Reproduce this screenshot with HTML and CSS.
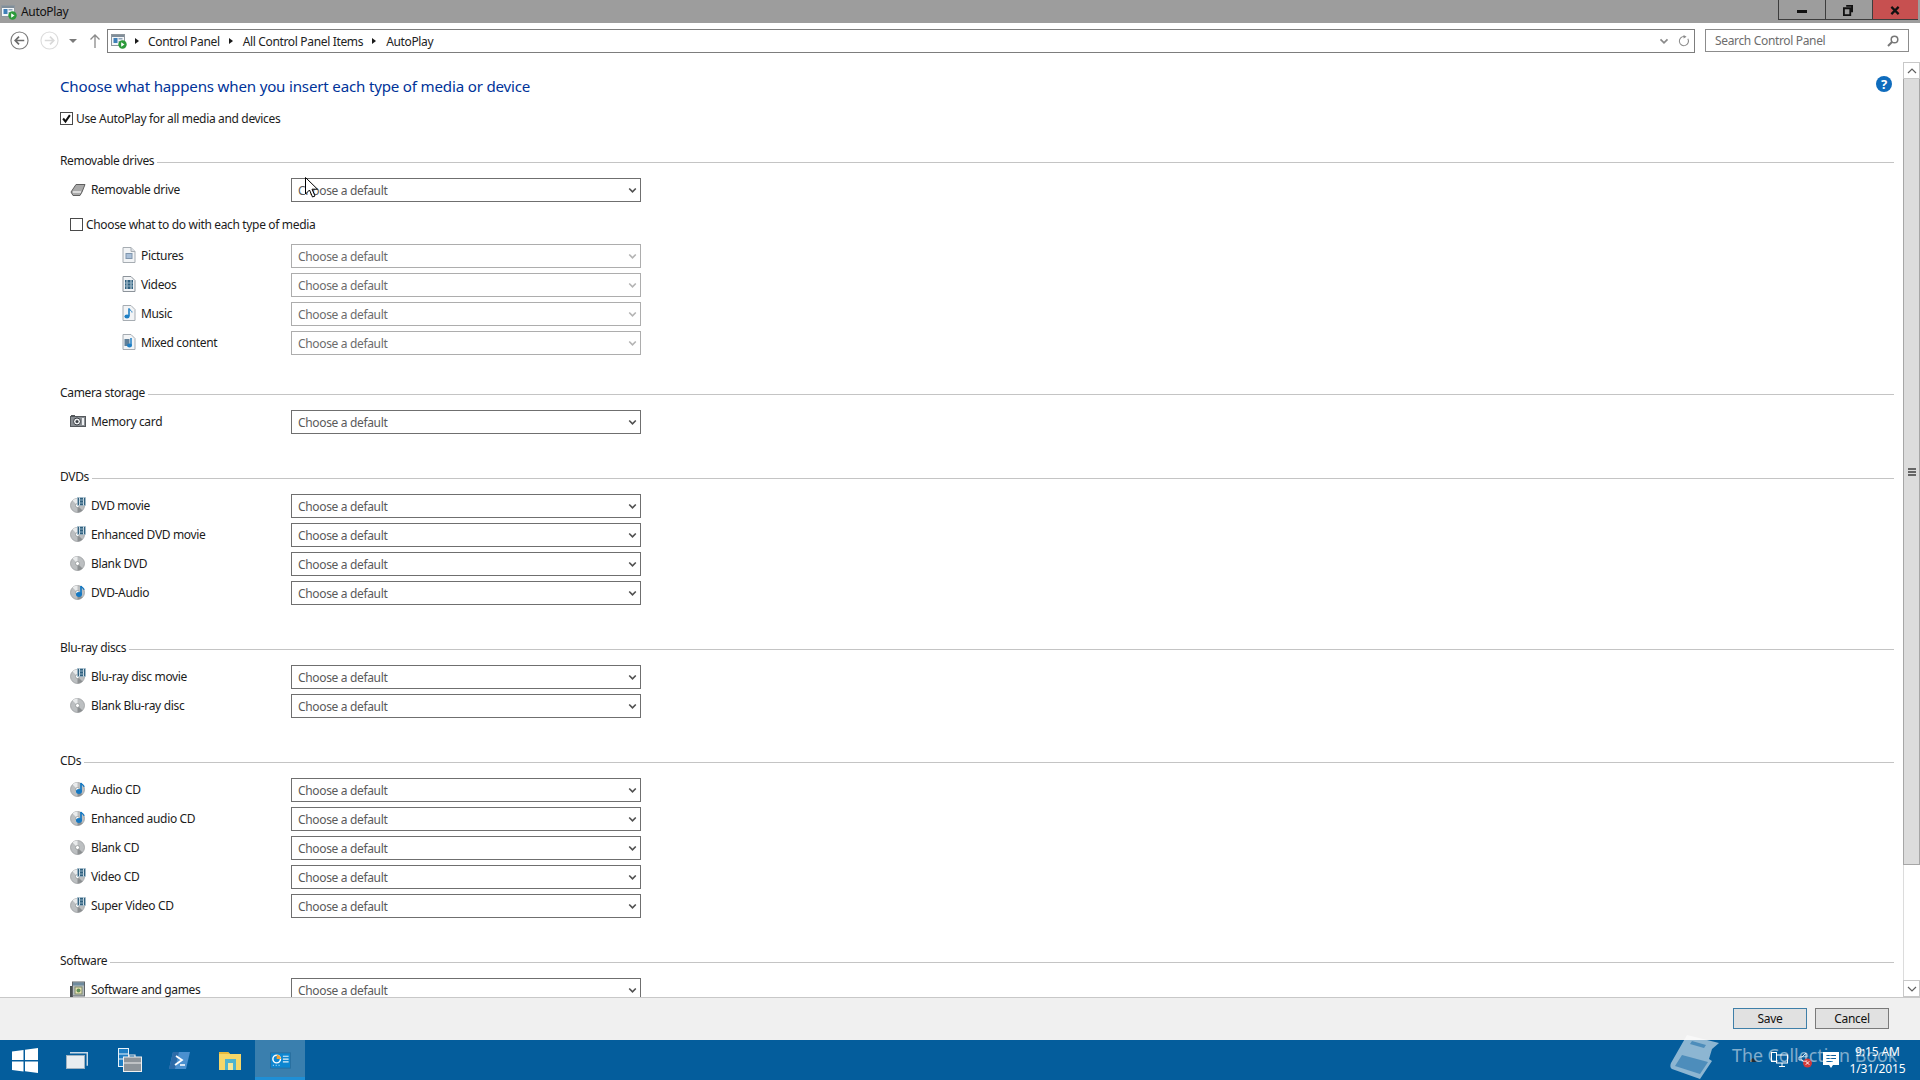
FILE: index.html
```html
<!DOCTYPE html>
<html lang="en">
<head>
<meta charset="utf-8">
<title>AutoPlay</title>
<link rel="stylesheet" href="styles.css">
</head>
<body>
<svg class="defs" width="0" height="0" aria-hidden="true">
  <symbol id="chev" viewBox="0 0 11 8"><path d="M1.500 1.500 5.500 5.500 9.500 1.500" fill="none" stroke="currentColor" stroke-width="2"/></symbol>
  <symbol id="cp" viewBox="0 0 16 16"><rect x=".5" y="1.500" width="13" height="11" fill="#f4f6f8" stroke="#8f979e"/><rect x="1" y="2" width="12" height="2" fill="#7f8d99"/><rect x="2.500" y="5" width="4" height="5" fill="#3f7fb8"/><rect x="7.500" y="5" width="4" height="1.500" fill="#8fa5b8"/><rect x="7.500" y="8" width="4" height="1.500" fill="#8fa5b8"/><circle cx="11.500" cy="11.500" r="4.200" fill="#2c9a3a"/><path d="M10.200 9.300v4.400l3.300-2.200z" fill="#fff"/></symbol>
  <symbol id="drive" viewBox="0 0 16 16"><path d="M1 11 6 3.500h9L12 11l-2 3.500H3z" fill="#a9a9a9" stroke="#5e5e5e"/><path d="M3 11h8" stroke="#ececec" stroke-width="1.500"/></symbol>
  <symbol id="doc-pic" viewBox="0 0 14 16"><path d="M1 .5h8l4 4v11H1z" fill="#f2f4f6" stroke="#a6acb2"/><path d="M9 .5v4h4" fill="#dde1e5" stroke="#a6acb2"/><rect x="4" y="6.500" width="6" height="5" fill="#a9bfd8" stroke="#8096ad"/></symbol>
  <symbol id="doc-vid" viewBox="0 0 14 16"><path d="M1 .5h8l4 4v11H1z" fill="#f2f4f6" stroke="#8c939a"/><rect x="3" y="4" width="8" height="9" fill="#31617f"/><path d="M5 4v9M9 4v9" stroke="#c9d6df"/><path d="M3 7h8M3 10h8" stroke="#8fb0c4"/></symbol>
  <symbol id="doc-mus" viewBox="0 0 14 16"><path d="M1 .5h8l4 4v11H1z" fill="#f2f4f6" stroke="#a6acb2"/><path d="M7 3.500v7.500" stroke="#1f7fc4" stroke-width="1.600"/><path d="M7 3.500c1 2 3 2 3 4" stroke="#1f7fc4" fill="none"/><ellipse cx="5" cy="11.500" rx="2.600" ry="2" fill="#1f7fc4"/></symbol>
  <symbol id="doc-mix" viewBox="0 0 14 16"><path d="M1 .5h8l4 4v11H1z" fill="#f2f4f6" stroke="#a6acb2"/><rect x="2.500" y="5" width="5" height="7" fill="#5f7f98"/><path d="M9 4v7.500" stroke="#1f7fc4" stroke-width="1.500"/><ellipse cx="7.500" cy="11.500" rx="2.500" ry="2" fill="#1f7fc4"/></symbol>
  <symbol id="camera" viewBox="0 0 16 16"><rect x=".5" y="3.500" width="15" height="10" fill="#8a8f94" stroke="#54585c"/><rect x="1" y="2" width="4" height="2" fill="#54585c"/><circle cx="7" cy="8.500" r="3.500" fill="#eef0f2" stroke="#3c4045"/><circle cx="7" cy="8.500" r="1.500" fill="#3c4045"/><rect x="12" y="5" width="2" height="7" fill="#eef0f2"/></symbol>
  <symbol id="disc" viewBox="0 0 16 16"><circle cx="7.500" cy="8.500" r="7" fill="#bcbfc1" stroke="#9a9d9f" stroke-width=".8"/><path d="M7.500 8.500 2.500 3.500A7 7 0 0 1 7.500 1.500z" fill="#e9ebec"/><path d="M7.500 8.500 12.500 13.500A7 7 0 0 1 7.500 15.500z" fill="#8c9092"/><circle cx="7.500" cy="8.500" r="2" fill="#fff" stroke="#8c9092" stroke-width=".7"/></symbol>
  <symbol id="disc-vid" viewBox="0 0 16 16"><use href="#disc"/><rect x="7.500" y=".5" width="8" height="8" fill="#31617f" stroke="#a9c0cf" stroke-width=".6"/><path d="M9.500 .5v8M13.500 .5v8" stroke="#d3dfe6"/><path d="M9.500 3h4M9.500 6h4" stroke="#8fb0c4"/></symbol>
  <symbol id="disc-mus" viewBox="0 0 16 16"><use href="#disc"/><path d="M11 2v8" stroke="#1478c2" stroke-width="1.700"/><path d="M11 2c1 2 3 2 3 4" stroke="#1478c2" fill="none" stroke-width="1.200"/><ellipse cx="9" cy="10.500" rx="3" ry="2.400" fill="#1478c2"/></symbol>
  <symbol id="games" viewBox="0 0 16 16"><path d="M0 5h3v11H0z" fill="#4a4f52"/><rect x="2.500" y="1" width="12" height="14" fill="#b6bcc0" stroke="#5f6468"/><rect x="3" y="1.500" width="11" height="3" fill="#6f8b9e"/><rect x="5" y="6" width="7" height="7" fill="#e7e1b0" stroke="#7c8a6a"/><circle cx="8.500" cy="9.500" r="2" fill="#5f8f55"/></symbol>
</svg>

<header class="titlebar">
  <svg class="title-icon"><use href="#cp"/></svg>
  <span class="title-text">AutoPlay</span>
  <div class="window-buttons">
    <div class="wb"><span class="wb-min"></span></div>
    <div class="wb"><svg class="wb-svg" viewBox="0 0 11 12"><path d="M3.500 1H10V8M1 3.500H8V11H1z" fill="none" stroke="#111" stroke-width="2"/></svg></div>
    <div class="wb wb-close"><svg class="wb-svg" viewBox="0 0 11 11"><path d="M1.500 1.500 9.500 9.500M9.500 1.500 1.500 9.500" stroke="#111" stroke-width="2.400"/></svg></div>
  </div>
</header>

<nav class="navbar">
  <svg class="nav-circle" viewBox="0 0 20 20"><circle cx="10" cy="10" r="9" fill="#fff" stroke="#7c7c7c" stroke-width="1.200"/><path d="M15 10H6M9.500 6 5.500 10 9.500 14" fill="none" stroke="#6b6b6b" stroke-width="1.800"/></svg>
  <svg class="nav-circle nav-forward" viewBox="0 0 20 20"><circle cx="10" cy="10" r="9" fill="#fff" stroke="#dcdcdc" stroke-width="1.200"/><path d="M5 10H14M10.500 6 14.500 10 10.500 14" fill="none" stroke="#d9d9d9" stroke-width="1.800"/></svg>
  <span class="nav-drop"></span>
  <svg class="nav-up" viewBox="0 0 12 16"><path d="M6 15V2M1.500 6.500 6 2l4.500 4.500" fill="none" stroke="#8a8a8a" stroke-width="1.300"/></svg>
  <div class="address">
    <svg class="addr-icon"><use href="#cp"/></svg>
    <span class="crumb-arrow first"></span><span class="crumb">Control Panel</span>
    <span class="crumb-arrow"></span><span class="crumb">All Control Panel Items</span>
    <span class="crumb-arrow"></span><span class="crumb">AutoPlay</span>
    <svg class="addr-chev"><use href="#chev"/></svg>
    <svg class="addr-refresh" viewBox="0 0 14 14"><path d="M11.500 4.500A5.300 5.300 0 1 1 7 1.800" fill="none" stroke="#8a8a8a" stroke-width="1.200"/><path d="M6.500 0 10 2 6.500 4z" fill="#8a8a8a"/></svg>
  </div>
  <div class="search">
    <span class="search-text">Search Control Panel</span>
    <svg class="search-icon" viewBox="0 0 12 12"><circle cx="7.500" cy="4.500" r="3.300" fill="none" stroke="#777" stroke-width="1.500"/><path d="M5 7 1 11" stroke="#777" stroke-width="2"/></svg>
  </div>
</nav>

<main class="main">
  <div class="content">
    <div class="head-row">
      <h1 class="heading">Choose what happens when you insert each type of media or device</h1>
      <svg class="help" viewBox="0 0 16 16"><circle cx="8" cy="8" r="8" fill="#0f6cbd"/><text x="8" y="12.500" class="help-q">?</text></svg>
    </div>
    <label class="check-row"><span class="check checked"><svg viewBox="0 0 13 13"><path d="M2.500 6.500 5.300 10 10.500 2.500" fill="none" stroke="#111" stroke-width="2.400"/></svg></span>Use AutoPlay for all media and devices</label>

    <section class="section sec-first">
      <div class="sec-head"><span class="sec-title">Removable drives</span><span class="sec-line"></span></div>
      <div class="row"><div class="name"><svg class="ic"><use href="#drive"/></svg>Removable drive</div><div class="combo"><span>Choose a default</span><svg class="arrow"><use href="#chev"/></svg></div></div>
      <label class="check-row sub-check"><span class="check"></span>Choose what to do with each type of media</label>
      <div class="row"><div class="name sub"><svg class="ic-doc"><use href="#doc-pic"/></svg>Pictures</div><div class="combo off"><span>Choose a default</span><svg class="arrow"><use href="#chev"/></svg></div></div>
      <div class="row"><div class="name sub"><svg class="ic-doc"><use href="#doc-vid"/></svg>Videos</div><div class="combo off"><span>Choose a default</span><svg class="arrow"><use href="#chev"/></svg></div></div>
      <div class="row"><div class="name sub"><svg class="ic-doc"><use href="#doc-mus"/></svg>Music</div><div class="combo off"><span>Choose a default</span><svg class="arrow"><use href="#chev"/></svg></div></div>
      <div class="row"><div class="name sub"><svg class="ic-doc"><use href="#doc-mix"/></svg>Mixed content</div><div class="combo off"><span>Choose a default</span><svg class="arrow"><use href="#chev"/></svg></div></div>
    </section>

    <section class="section sec-camera">
      <div class="sec-head"><span class="sec-title">Camera storage</span><span class="sec-line"></span></div>
      <div class="row"><div class="name"><svg class="ic"><use href="#camera"/></svg>Memory card</div><div class="combo"><span>Choose a default</span><svg class="arrow"><use href="#chev"/></svg></div></div>
    </section>

    <section class="section">
      <div class="sec-head"><span class="sec-title">DVDs</span><span class="sec-line"></span></div>
      <div class="row"><div class="name"><svg class="ic"><use href="#disc-vid"/></svg>DVD movie</div><div class="combo"><span>Choose a default</span><svg class="arrow"><use href="#chev"/></svg></div></div>
      <div class="row"><div class="name"><svg class="ic"><use href="#disc-vid"/></svg>Enhanced DVD movie</div><div class="combo"><span>Choose a default</span><svg class="arrow"><use href="#chev"/></svg></div></div>
      <div class="row"><div class="name"><svg class="ic"><use href="#disc"/></svg>Blank DVD</div><div class="combo"><span>Choose a default</span><svg class="arrow"><use href="#chev"/></svg></div></div>
      <div class="row"><div class="name"><svg class="ic"><use href="#disc-mus"/></svg>DVD-Audio</div><div class="combo"><span>Choose a default</span><svg class="arrow"><use href="#chev"/></svg></div></div>
    </section>

    <section class="section">
      <div class="sec-head"><span class="sec-title">Blu-ray discs</span><span class="sec-line"></span></div>
      <div class="row"><div class="name"><svg class="ic"><use href="#disc-vid"/></svg>Blu-ray disc movie</div><div class="combo"><span>Choose a default</span><svg class="arrow"><use href="#chev"/></svg></div></div>
      <div class="row"><div class="name"><svg class="ic"><use href="#disc"/></svg>Blank Blu-ray disc</div><div class="combo"><span>Choose a default</span><svg class="arrow"><use href="#chev"/></svg></div></div>
    </section>

    <section class="section">
      <div class="sec-head"><span class="sec-title">CDs</span><span class="sec-line"></span></div>
      <div class="row"><div class="name"><svg class="ic"><use href="#disc-mus"/></svg>Audio CD</div><div class="combo"><span>Choose a default</span><svg class="arrow"><use href="#chev"/></svg></div></div>
      <div class="row"><div class="name"><svg class="ic"><use href="#disc-mus"/></svg>Enhanced audio CD</div><div class="combo"><span>Choose a default</span><svg class="arrow"><use href="#chev"/></svg></div></div>
      <div class="row"><div class="name"><svg class="ic"><use href="#disc"/></svg>Blank CD</div><div class="combo"><span>Choose a default</span><svg class="arrow"><use href="#chev"/></svg></div></div>
      <div class="row"><div class="name"><svg class="ic"><use href="#disc-vid"/></svg>Video CD</div><div class="combo"><span>Choose a default</span><svg class="arrow"><use href="#chev"/></svg></div></div>
      <div class="row"><div class="name"><svg class="ic"><use href="#disc-vid"/></svg>Super Video CD</div><div class="combo"><span>Choose a default</span><svg class="arrow"><use href="#chev"/></svg></div></div>
    </section>

    <section class="section">
      <div class="sec-head"><span class="sec-title">Software</span><span class="sec-line"></span></div>
      <div class="row"><div class="name"><svg class="ic"><use href="#games"/></svg>Software and games</div><div class="combo"><span>Choose a default</span><svg class="arrow"><use href="#chev"/></svg></div></div>
    </section>
  </div>
  <aside class="scrollbar">
    <div class="sb-btn"><svg class="sb-chev" viewBox="0 0 10 6"><path d="M1 5 5 1 9 5" fill="none" stroke="#606060" stroke-width="1.200"/></svg></div>
    <div class="sb-thumb"><span class="grip"></span><span class="grip"></span><span class="grip"></span></div>
    <div class="sb-track"></div>
    <div class="sb-btn"><svg class="sb-chev" viewBox="0 0 10 6"><path d="M1 1 5 5 9 1" fill="none" stroke="#606060" stroke-width="1.200"/></svg></div>
  </aside>
</main>

<footer class="footer">
  <button class="btn btn-default">Save</button>
  <button class="btn">Cancel</button>
</footer>

<div class="taskbar">
  <div class="task-item"><svg class="t-start" viewBox="0 0 26 25"><path d="M0 3.500 11.500 2v10H0zM13 1.800 26 0v12H13zM0 13.500h11.500v10L0 22zM13 13.500h13V25l-13-1.800z" fill="#fff"/></svg></div>
  <div class="task-item"><svg class="t-view" viewBox="0 0 22 17"><path d="M4 .7h17.300v13" fill="none" stroke="#c9d9e6" stroke-width="1.500"/><rect x=".5" y="3.500" width="18" height="13" fill="#e9edf0" stroke="#9fb2c1"/></svg></div>
  <div class="task-item"><svg class="t-server" viewBox="0 0 24 24"><rect x=".5" y=".5" width="10" height="18" fill="#1d7ec4" stroke="#e8f2f9"/><path d="M1 6h9M1 11h9" stroke="#e8f2f9"/><path d="M11 9V7h6v2" fill="none" stroke="#e8e8e8" stroke-width="1.200"/><rect x="5.500" y="9" width="18" height="14.500" fill="#8d949a" stroke="#f0f0f0"/><path d="M6 15h17" stroke="#f0f0f0"/></svg></div>
  <div class="task-item"><svg class="t-ps" viewBox="0 0 21 17"><path d="M4 0h17l-4 17H0z" fill="#4a90cf"/><path d="M0 17 4 0h6L6 17z" fill="#2c6ba8"/><path d="M7 4l6 4-7 5" fill="none" stroke="#fff" stroke-width="1.800"/><path d="M11 13h5" stroke="#fff" stroke-width="1.500"/></svg></div>
  <div class="task-item"><svg class="t-folder" viewBox="0 0 22 19"><path d="M0 1h9l2 2h11v16H0z" fill="#f6d768"/><path d="M0 1h9l2 2H0z" fill="#e7b93c"/><rect x="6" y="8" width="11" height="11" fill="#4fb4cf"/><rect x="9" y="12" width="5" height="7" fill="#f6e79a"/></svg></div>
  <div class="task-item task-active"><svg class="t-cp" viewBox="0 0 22 17"><rect x=".5" y=".5" width="21" height="16" fill="#0e86d0" stroke="#2a6f9f"/><circle cx="7" cy="7" r="4" fill="none" stroke="#fff" stroke-width="1.500"/><path d="M7 7V2.500A4.500 4.500 0 0 1 11.500 7z" fill="#f2a33a"/><path d="M13.500 4h6M13.500 7h6M13.500 10h6" stroke="#e6f3fb" stroke-width="1.200"/><path d="M3 13.500h1M6 13.500h1M9 13.500h1" stroke="#e6f3fb"/></svg></div>
  <div class="tray">
    <span class="tray-up"></span>
    <svg class="tray-net" viewBox="0 0 17 16"><rect x=".5" y=".5" width="5" height="9" fill="none" stroke="#fff"/><rect x="5.500" y="3" width="11" height="8" fill="#0a5f9e" stroke="#fff"/><path d="M11 11v3M8 14.500h6" stroke="#fff"/></svg>
    <svg class="tray-vol" viewBox="0 0 14 16"><path d="M1 5h3l4-4v11L4 8H1z" fill="none" stroke="#cfe0ee"/><circle cx="9.500" cy="11" r="4.500" fill="#d23a3a"/><path d="M7.800 9.300l3.400 3.400M11.200 9.300l-3.400 3.400" stroke="#fff"/></svg>
    <svg class="tray-msg" viewBox="0 0 16 17"><path d="M0 0h16v13H10L8 16 6 13H0z" fill="#fff"/><path d="M3 3.500h10M3 6.500h10M3 9.500h7" stroke="#0a5f9e"/></svg>
    <div class="clock"><span>9:15 AM</span><span>1/31/2015</span></div>
  </div>
</div>

<div class="watermark">
  <svg class="wm-book" viewBox="0 0 50 46"><path d="M17 2 49 10 42 16l-3 10 3 2-12 18L2 36c-2-1-2-4-1-6z" fill="#fff" fill-opacity=".55"/><path d="M22 8l14 4-2 3-14-4zM5 33l25 8 8-12-26-7z" fill="#1a6ca8" fill-opacity=".55"/></svg>
  <span class="wm-text">The Collection Book</span>
</div>

<svg class="cursor" viewBox="0 0 13 21"><path d="M.5.5V17l4-4 3 7 2.500-1-3-6.800H12.500z" fill="#fff" stroke="#000"/></svg>
</body>
</html>
```
FILE: styles.css
```css
* { box-sizing: border-box; }
html, body { margin: 0; height: 100%; }
body {
  width: 1920px;
  height: 1080px;
  overflow: hidden;
  display: flex;
  flex-direction: column;
  position: relative;
  background: #fff;
  color: #1c1c1c;
  font-family: "Noto Sans", "Open Sans", sans-serif;
  font-size: 12px;
  letter-spacing: -0.34px;
}
.defs { position: absolute; }

/* title bar */
.titlebar {
  height: 23px;
  flex: none;
  display: flex;
  background: #9d9d9d;
  align-items: flex-start;
}
.title-icon { width: 16px; height: 16px; margin: 4px 4px 0 1px; }
.title-text { margin-top: 3px; line-height: 17px; color: #111; }
.window-buttons { margin-left: auto; margin-right: 2px; display: flex; height: 20px; border-bottom: 1px solid #3d3d3d; }
.wb { width: 47px; display: flex; align-items: center; justify-content: center; border-left: 1px solid #3d3d3d; }
.wb-close { background: #c75050; width: 46px; }
.wb-min { width: 10px; height: 3px; background: #111; margin-top: 3px; }
.wb-svg { width: 10px; height: 11px; margin: 1px 2px 0 0; }

/* navigation */
.navbar {
  height: 37px;
  flex: none;
  display: flex;
  align-items: flex-start;
  padding-top: 6px;
}
.nav-circle { width: 19px; height: 19px; margin: 2px 0 0 10px; flex: none; }
.nav-forward { margin-left: 11px; }
.nav-drop { width: 0; height: 0; border: 4px solid transparent; border-top: 4px solid #7a7a7a; border-bottom: 0; margin: 10px 0 0 10px; }
.nav-up { width: 12px; height: 16px; margin: 4px 0 0 12px; flex: none; }
.address {
  margin-left: 6px;
  width: 1588px;
  height: 24px;
  border: 1px solid #7d7d7d;
  display: flex;
  align-items: center;
  padding-left: 3px;
  color: #222;
}
.addr-icon { width: 16px; height: 16px; flex: none; }
.crumb-arrow { width: 0; height: 0; border: 3.500px solid transparent; border-left: 4px solid #1a1a1a; border-right: 0; margin: 0 10px 0 9px; }
.crumb-arrow.first { margin: 0 9px 0 8px; }
.addr-chev { width: 10px; height: 7px; color: #8a8a8a; margin-left: auto; }
.addr-refresh { width: 12px; height: 14px; margin: 0 4px 0 9px; }
.search {
  margin-left: 10px;
  width: 204px;
  height: 23px;
  border: 1px solid #8c8c8c;
  display: flex;
  align-items: center;
  justify-content: space-between;
  padding: 0 9px 0 9px;
  color: #6d6d6d;
}
.search-icon { width: 12px; height: 12px; }

/* main */
.main { flex: 1; min-height: 0; display: flex; }
.content { flex: 1; min-width: 0; padding: 15px 9px 0 60px; overflow: hidden; }
.head-row { display: flex; align-items: center; justify-content: space-between; height: 22px; }
.heading { margin: 0; font-size: 15.100px; font-weight: 400; line-height: 22px; color: #003399; letter-spacing: -0.18px; }
.help { width: 16px; height: 16px; margin: 0 2px 0 0; position: relative; top: -2px; }
.help-q { fill: #fff; font-size: 13px; font-weight: 700; text-anchor: middle; font-family: "Noto Sans", sans-serif; }
.check-row { display: flex; align-items: center; height: 17px; margin-top: 13px; }
.check { width: 13px; height: 13px; border: 1px solid #4a4a4a; margin-right: 3px; flex: none; background: #fff; }
.check svg { display: block; width: 11px; height: 11px; }
.sub-check { margin: 14px 0 11px 10px; }

.section { margin-top: 36px; }
.sec-camera { margin-top: 31px; }
.sec-first { margin-top: 27px; }
.sec-head { display: flex; align-items: center; height: 16px; margin-bottom: 8px; }
.sec-title { line-height: 16px; position: relative; top: -1px; margin-right: 3px; }
.sec-line { flex: 1; height: 1px; background: #c4c4c4; }
.row { display: grid; grid-template-columns: 231px 350px; height: 24px; margin-bottom: 5px; }
.row:last-child { margin-bottom: 0; }
.name { display: flex; align-items: center; padding: 0 0 2px 10px; }
.name.sub { padding-left: 62px; }
.ic { width: 16px; height: 16px; margin-right: 5px; flex: none; }
.ic-doc { width: 14px; height: 16px; margin-right: 5px; flex: none; }
.combo {
  border: 1px solid #6f6f6f;
  display: flex;
  align-items: center;
  justify-content: space-between;
  padding: 0 3px 0 6px;
  color: #5a5a5a;
  background: #fff;
}
.combo.off { border-color: #adadad; color: #6c6c6c; }
.arrow { width: 9px; height: 7px; color: #4f4f4f; }
.combo.off .arrow { color: #b4b4b4; }

/* scrollbar */
.scrollbar { width: 17px; padding-top: 2px; display: flex; flex-direction: column; flex: none; }
.sb-btn { height: 17px; flex: none; background: #fff; border: 1px solid #c8c8c8; display: flex; align-items: center; justify-content: center; }
.sb-chev { width: 10px; height: 6px; }
.sb-thumb { height: 786px; flex: none; background: #dcdcdc; border-left: 1px solid #a6a6a6; border-right: 1px solid #a6a6a6; border-bottom: 1px solid #a6a6a6; display: flex; flex-direction: column; align-items: center; justify-content: center; gap: 1px; }
.grip { width: 8px; height: 2px; background: #666; }
.sb-track { flex: 1; background: #fff; border-left: 1px solid #dcdcdc; }

/* footer */
.footer {
  height: 43px;
  flex: none;
  background: #f0f0f0;
  border-top: 1px solid #c8c8c8;
  display: flex;
  justify-content: flex-end;
  align-items: flex-start;
  gap: 8px;
  padding: 10px 31px 0 0;
}
.btn {
  width: 74px;
  height: 21px;
  padding: 0;
  background: #e1e1e1;
  border: 1px solid #7a7a7a;
  font: inherit;
  letter-spacing: inherit;
  color: #111;
}
.btn-default { border-color: #3f7fa8; }

/* taskbar */
.taskbar { height: 40px; flex: none; background: #045d9c; display: flex; position: relative; }
.task-item { width: 51px; display: flex; align-items: center; justify-content: center; }
.task-active { width: 50px; background: #3a7fae; border-bottom: 3px solid #1f8fd6; padding-top: 3px; }
.t-start { width: 26px; height: 25px; margin-right: 2px; }
.t-view { width: 22px; height: 17px; }
.t-server { width: 24px; height: 24px; margin-left: 5px; }
.t-ps { width: 21px; height: 17px; margin-left: 1px; }
.t-folder { width: 22px; height: 19px; }
.t-cp { width: 21px; height: 17px; }
.tray { margin-left: auto; display: flex; align-items: center; color: #fff; padding-right: 16px; }
.tray-up { width: 0; height: 0; border: 5px solid transparent; border-bottom: 4px solid #1e2a33; border-top: 0; margin-right: 13px; }
.tray-net { width: 17px; height: 16px; margin-right: 10px; }
.tray-vol { width: 14px; height: 16px; margin-right: 11px; }
.tray-msg { width: 16px; height: 17px; margin-right: 12px; }
.clock { display: flex; flex-direction: column; align-items: center; width: 53px; line-height: 17px; letter-spacing: -0.1px; }

/* overlays */
.watermark { position: absolute; left: 1670px; top: 1033px; display: flex; align-items: flex-start; gap: 12px; pointer-events: none; }
.wm-book { width: 50px; height: 46px; }
.wm-text { font-size: 17.800px; color: rgba(255, 255, 255, .5); margin-top: 9px; line-height: 26px; letter-spacing: 0; }
.cursor { position: absolute; left: 305px; top: 177px; width: 13px; height: 21px; }
```
